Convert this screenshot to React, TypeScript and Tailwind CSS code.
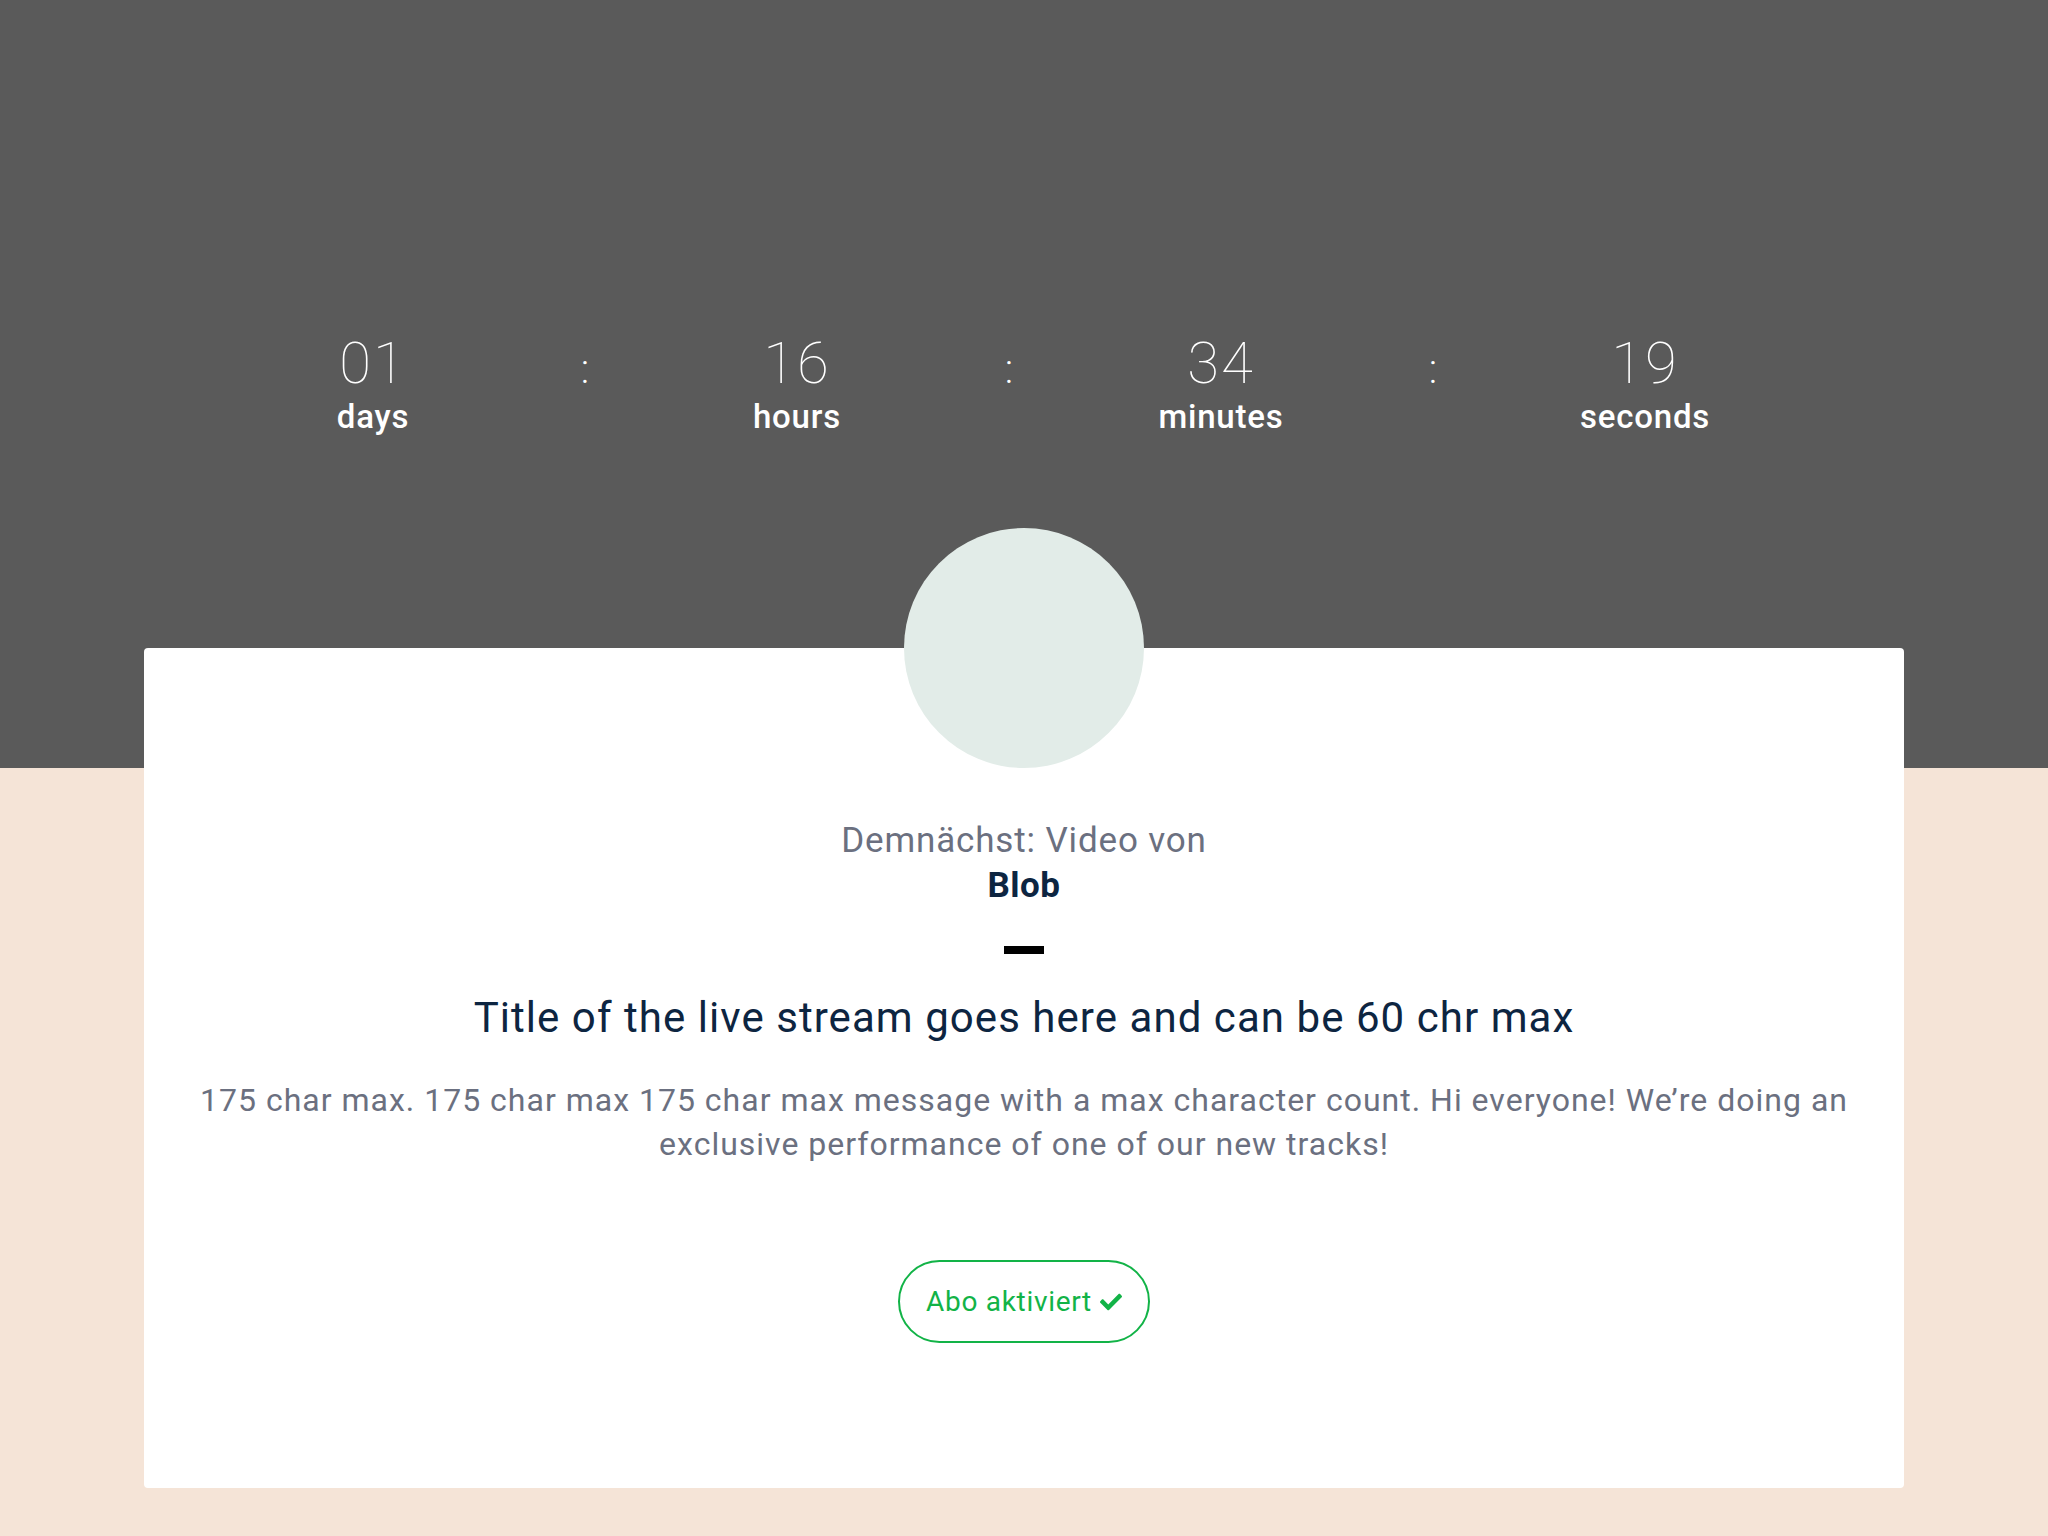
import React from "react";
import { FaCheck } from "react-icons/fa";

const units = [
  { v: "01", l: "days" },
  { v: "16", l: "hours" },
  { v: "34", l: "minutes" },
  { v: "19", l: "seconds" },
];

export default function App() {
  return (
    <div
      className="min-h-[1536px] w-full bg-[linear-gradient(to_bottom,#5a5a5a_0px,#5a5a5a_768px,#f5e4d7_768px)]"
      style={{ fontFamily: "Roboto, 'Liberation Sans', sans-serif" }}
    >
      <div className="flex pt-[334px] pl-[223px] text-white">
        {units.map((u, i) => (
          <React.Fragment key={u.l}>
            <div className="flex w-[300px] flex-col items-center">
              <div className="text-[58px] font-thin leading-none tracking-[2px]">{u.v}</div>
              <div className="mt-[8px] text-[33px] font-medium leading-none tracking-[0.8px]">{u.l}</div>
            </div>
            {i < 3 && (
              <div className="flex w-[124px] justify-center pt-[16px] text-[40px] font-light leading-none">:</div>
            )}
          </React.Fragment>
        ))}
      </div>

      <div className="mx-[144px] mt-[215px] flex flex-col items-center rounded-[4px] bg-white pb-[145px]">
        <div className="-mt-[120px] h-[240px] w-[240px] rounded-full bg-[#e2ece8]" />
        <div className="mt-[50px] text-[35px] leading-[45px] tracking-[0.85px] text-[#6b7080]">Demnächst: Video von</div>
        <div className="text-[35px] font-bold leading-[45px] tracking-[0.5px] text-[#0d2541]">Blob</div>
        <div className="mt-[38px] h-[8px] w-[40px] bg-black" />
        <div className="mt-[39px] text-[42px] leading-[50px] tracking-[1.05px] text-[#0d2541]">
          Title of the live stream goes here and can be 60 chr max
        </div>
        <p className="mt-[35px] px-[20px] text-center text-[32px] leading-[44px] tracking-[1px] text-[#6b7080]">
          175 char max. 175 char max 175 char max message with a max character count. Hi everyone! We’re doing an
          <br />
          exclusive performance of one of our new tracks!
        </p>
        <button className="mt-[94px] flex h-[83px] w-[252px] items-center justify-center gap-[8px] rounded-full border-2 border-[#12b347] text-[28px] tracking-[0.7px] text-[#12b347]">
          <span>Abo aktiviert</span>
          <FaCheck className="h-[22px] w-[22px]" />
        </button>
      </div>
    </div>
  );
}
